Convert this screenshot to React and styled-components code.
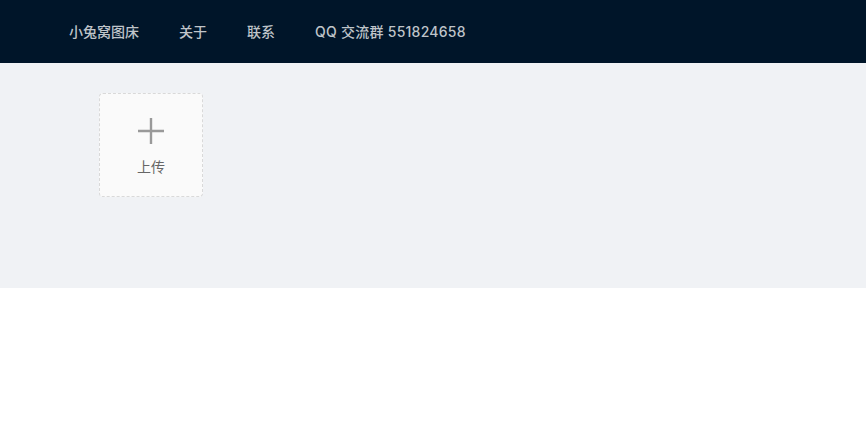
import React from 'react';
import styled, { createGlobalStyle } from 'styled-components';

const GlobalStyle = createGlobalStyle`
    body {
        margin: 0;
        background: #fff;
        font-family: Inter, "Noto Sans CJK SC", sans-serif;
        font-size: 14px;
    }
`;

const Header = styled.header`
    display: flex;
    align-items: center;
    height: 63px;
    padding: 0 49px;
    background: #001529;
`;

const MenuItem = styled.a`
    padding: 0 20px;
    color: #bfc4c9;
    font-size: 14px;
    font-weight: 500;
    letter-spacing: ${p => (p.$wide ? '0.25px' : '0')};
    line-height: 63px;
    text-decoration: none;
    white-space: nowrap;
`;

const Content = styled.main`
    height: 225px;
    box-sizing: border-box;
    padding: 30px 99px;
    background: #f0f2f5;
`;

const UploadCard = styled.div`
    display: flex;
    flex-direction: column;
    align-items: center;
    justify-content: center;
    width: 104px;
    height: 104px;
    box-sizing: border-box;
    padding-top: 4px;
    border: 1px dashed #d9d9d9;
    border-radius: 4px;
    background: #fafafa;
    cursor: pointer;
`;

const UploadText = styled.div`
    margin-top: 12px;
    color: #666;
    font-size: 14px;
    line-height: 20px;
`;

function PlusIcon() {
    return (
        <svg width="28" height="28" viewBox="0 0 28 28">
            <path d="M14 1v26M1 14h26" stroke="#999" strokeWidth="2.4" />
        </svg>
    );
}

const items = [
    { label: '小兔窝图床' },
    { label: '关于' },
    { label: '联系' },
    { label: 'QQ 交流群 551824658', wide: true },
];

export default function App() {
    return (
        <>
            <GlobalStyle />
            <Header>
                {items.map(item => (
                    <MenuItem key={item.label} $wide={item.wide}>{item.label}</MenuItem>
                ))}
            </Header>
            <Content>
                <UploadCard>
                    <PlusIcon />
                    <UploadText>上传</UploadText>
                </UploadCard>
            </Content>
        </>
    );
}
